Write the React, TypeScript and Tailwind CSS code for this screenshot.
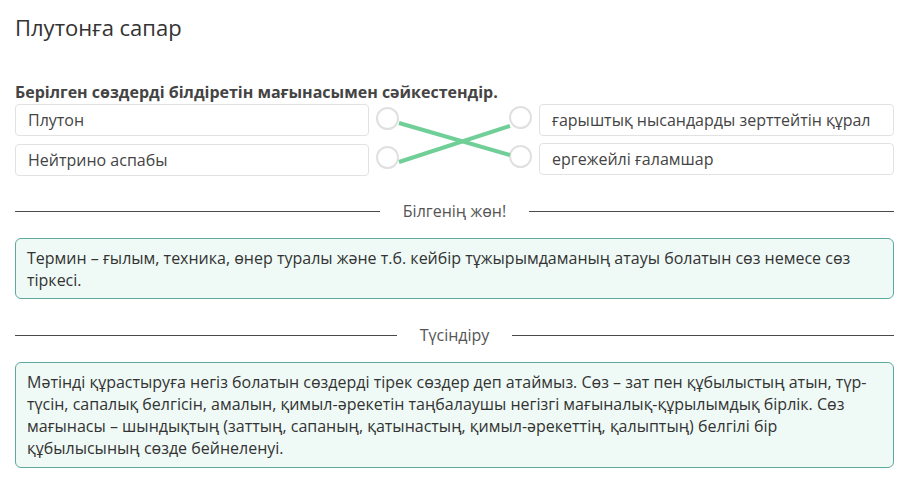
import React from "react";

const font = { fontFamily: '"Open Sans", "Noto Sans", sans-serif' };

function Divider({ label }: { label: string }) {
  return (
    <div className="flex items-center gap-[23px]">
      <div className="h-px flex-1 bg-[#4a4a4a]" />
      <span className="text-[16px] leading-[22px] text-[#555]">{label}</span>
      <div className="h-px flex-1 bg-[#4a4a4a]" />
    </div>
  );
}

function Term({ text }: { text: string }) {
  return (
    <div className="flex h-[32px] items-center rounded-[4px] border border-[#e2e2e2] bg-white px-3 text-[16px] text-[#444]">
      {text}
    </div>
  );
}

function Dot() {
  return <div className="h-[23px] w-[23px] rounded-full border-2 border-[#e0e0e0] bg-white" />;
}

export default function App() {
  return (
    <div style={font} className="min-h-[488px] w-[909px] bg-white px-[15px] text-[#333]">
      <h1 className="pt-[12px] text-[22px] leading-[30px] text-[#333]">Плутонға сапар</h1>

      <p className="mt-[39px] text-[16px] font-bold leading-[22px] text-[#444]">
        Берілген сөздерді білдіретін мағынасымен сәйкестендір.
      </p>

      <div className="mt-[1px] flex">
        <div className="flex w-[354px] flex-col gap-[8px]">
          <Term text="Плутон" />
          <Term text="Нейтрино аспабы" />
        </div>

        <div className="relative flex w-[170px] justify-between px-[7px]">
          <div className="flex flex-col gap-[16px] pt-[3px]">
            <Dot />
            <Dot />
          </div>
          <div className="flex flex-col gap-[16px] pt-[2px]">
            <Dot />
            <Dot />
          </div>
          <svg className="absolute left-0 top-0" width="170" height="80" viewBox="0 0 170 80">
            <line x1="30" y1="19" x2="141" y2="51" stroke="#6fcf97" strokeWidth="4" />
            <line x1="30" y1="58" x2="141" y2="22" stroke="#6fcf97" strokeWidth="4" />
          </svg>
        </div>

        <div className="flex w-[355px] flex-col gap-[7px]">
          <Term text="ғарыштық нысандарды зерттейтін құрал" />
          <Term text="ергежейлі ғаламшар" />
        </div>
      </div>

      <div className="mt-[24px]">
        <Divider label="Білгенің жөн!" />
      </div>

      <div className="mt-[16px] rounded-[6px] border border-[#5fa89d] bg-[#effaf6] px-[11px] pb-[7px] pt-[8px] text-[16px] leading-[22px] text-[#333]">
        Термин – ғылым, техника, өнер туралы және т.б. кейбір тұжырымдаманың атауы болатын сөз немесе сөз тіркесі.
      </div>

      <div className="mt-[25px]">
        <Divider label="Түсіндіру" />
      </div>

      <div className="mt-[16px] rounded-[6px] border border-[#5fa89d] bg-[#effaf6] px-[11px] py-[8px] text-[16px] leading-[22px] text-[#333]">
        Мәтінді құрастыруға негіз болатын сөздерді тірек сөздер деп атаймыз. Сөз – зат пен құбылыстың атын, түр-түсін, сапалық белгісін, амалын, қимыл-әрекетін таңбалаушы негізгі мағыналық-құрылымдық бірлік. Сөз мағынасы – шындықтың (заттың, сапаның, қатынастың, қимыл-әрекеттің, қалыптың) белгілі бір құбылысының сөзде бейнеленуі.
      </div>
    </div>
  );
}
